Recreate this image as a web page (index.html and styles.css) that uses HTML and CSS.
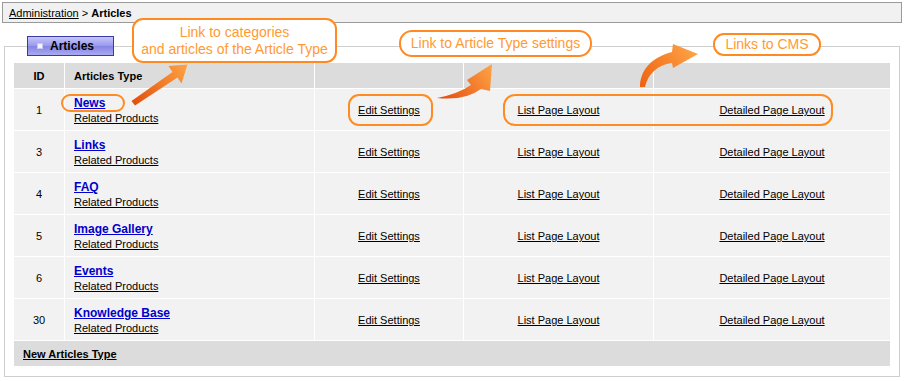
FILE: index.html
```html
<!DOCTYPE html>
<html lang="en">
<head>
  <meta charset="UTF-8" />
  <title>Articles</title>
  <link rel="stylesheet" href="styles.css">
</head>
<body>
  <div class="page">
    <div class="crumbs">
      <a href="#">Administration</a> &gt; <b>Articles</b>
    </div>

    <fieldset class="panel">
      <legend><span class="tab"><i class="tab-icon"></i>Articles</span></legend>
      <table class="grid">
        <colgroup>
          <col style="width:51px">
          <col style="width:250px">
          <col style="width:149px">
          <col style="width:190px">
          <col style="width:236px">
        </colgroup>
        <tr class="head">
          <th class="id">ID</th>
          <th>Articles Type</th>
          <th></th>
          <th></th>
          <th class="last"></th>
        </tr>
        <tr>
          <td class="id">1</td>
          <td><a class="name" href="#">News</a><a class="sub" href="#">Related Products</a></td>
          <td class="mid"><a href="#">Edit Settings</a></td>
          <td class="mid"><a href="#">List Page Layout</a></td>
          <td class="mid last"><a href="#">Detailed Page Layout</a></td>
        </tr>
        <tr>
          <td class="id">3</td>
          <td><a class="name" href="#">Links</a><a class="sub" href="#">Related Products</a></td>
          <td class="mid"><a href="#">Edit Settings</a></td>
          <td class="mid"><a href="#">List Page Layout</a></td>
          <td class="mid last"><a href="#">Detailed Page Layout</a></td>
        </tr>
        <tr>
          <td class="id">4</td>
          <td><a class="name" href="#">FAQ</a><a class="sub" href="#">Related Products</a></td>
          <td class="mid"><a href="#">Edit Settings</a></td>
          <td class="mid"><a href="#">List Page Layout</a></td>
          <td class="mid last"><a href="#">Detailed Page Layout</a></td>
        </tr>
        <tr>
          <td class="id">5</td>
          <td><a class="name" href="#">Image Gallery</a><a class="sub" href="#">Related Products</a></td>
          <td class="mid"><a href="#">Edit Settings</a></td>
          <td class="mid"><a href="#">List Page Layout</a></td>
          <td class="mid last"><a href="#">Detailed Page Layout</a></td>
        </tr>
        <tr>
          <td class="id">6</td>
          <td><a class="name" href="#">Events</a><a class="sub" href="#">Related Products</a></td>
          <td class="mid"><a href="#">Edit Settings</a></td>
          <td class="mid"><a href="#">List Page Layout</a></td>
          <td class="mid last"><a href="#">Detailed Page Layout</a></td>
        </tr>
        <tr>
          <td class="id">30</td>
          <td><a class="name" href="#">Knowledge Base</a><a class="sub" href="#">Related Products</a></td>
          <td class="mid"><a href="#">Edit Settings</a></td>
          <td class="mid"><a href="#">List Page Layout</a></td>
          <td class="mid last"><a href="#">Detailed Page Layout</a></td>
        </tr>
        <tr class="foot">
          <td colspan="5"><a href="#">New Articles Type</a></td>
        </tr>
      </table>
    </fieldset>

    <!-- annotations laid over the screen -->
    <div class="note note-cats">Link to categories<br>and articles of the Article Type</div>
    <div class="note note-settings">Link to Article Type settings</div>
    <div class="note note-cms">Links to CMS</div>

    <div class="ring ring-news"></div>
    <div class="ring ring-edit"></div>
    <div class="ring ring-cms"></div>

    <svg class="arrows" width="904" height="381" viewBox="0 0 904 381">
      <defs>
        <linearGradient id="g1" x1="133" y1="103" x2="188" y2="64" gradientUnits="userSpaceOnUse">
          <stop offset="0" stop-color="#e2500c"/>
          <stop offset="1" stop-color="#ffa445"/>
        </linearGradient>
        <linearGradient id="g2" x1="437" y1="98" x2="492" y2="64" gradientUnits="userSpaceOnUse">
          <stop offset="0" stop-color="#e2480a"/>
          <stop offset="1" stop-color="#ffa447"/>
        </linearGradient>
        <linearGradient id="g3" x1="640" y1="87" x2="698" y2="48" gradientUnits="userSpaceOnUse">
          <stop offset="0" stop-color="#ee620e"/>
          <stop offset="1" stop-color="#ffa64a"/>
        </linearGradient>
      </defs>
      <path d="M131.5,101 L172.5,72 L168.5,66 L187.5,64.5 L181.5,83.5 L177.5,77.5 L135,105.5 Z" fill="url(#g1)"/>
      <path d="M437,98 Q458,94 471,85 L467,80 L492,64 L490,91 L481,89 Q465,101 437,98 Z" fill="url(#g2)"/>
      <path d="M640,87 C640,70 652,57 672,52 L673,44 L698,54 L673,68 L672,63 C657,65 648,74 645,87 Z" fill="url(#g3)"/>
    </svg>
  </div>
</body>
</html>
```

FILE: styles.css
```css
body {
  margin: 0;
  background-color: #fff;
  color: #000;
  font-family: "Liberation Sans", Arial, sans-serif;
  font-size: 11px;
}

a {
  color: #000;
}

.page {
  position: relative;
  width: 904px;
  height: 381px;
  padding: 2px;
  box-sizing: border-box;
}

.crumbs {
  height: 19px;
  line-height: 20px;
  padding: 0 6px;
  border: 1px solid #9a9a9a;
  background-color: #f1f1f1;
}

.panel {
  margin: 13px 2px 0 2px;
  padding: 7px 9px 10px 9px;
  border: 1px solid #cfcfcf;
  min-width: 0;
}

.panel legend {
  padding: 0;
  margin-left: 13px;
}

.tab {
  display: flex;
  align-items: center;
  width: 87px;
  height: 20px;
  box-sizing: border-box;
  padding-left: 9px;
  border: 1px solid #3a3aa6;
  background: linear-gradient(#c6c6fa, #9a9aee 48%, #8585e4 52%, #a9a9f2);
  font-size: 12px;
  font-weight: bold;
}

.tab-icon {
  display: block;
  width: 4px;
  height: 4px;
  margin-right: 7px;
  border: 1px solid #c8c8e8;
  background-color: #f4f4ff;
}

.grid {
  width: 876px;
  border-collapse: separate;
  border-spacing: 0;
  table-layout: fixed;
}

.grid th,
.grid td {
  padding: 0;
  border-right: 1px solid #fff;
  border-bottom: 1px solid #fff;
  background-color: #f2f2f2;
  vertical-align: middle;
}

.grid th {
  height: 25px;
  background-color: #dcdcdc;
  text-align: left;
  padding-left: 9px;
  font-weight: bold;
}

.grid td {
  height: 41px;
  padding-left: 9px;
}

.grid .id {
  text-align: center;
  padding-left: 0;
}

.grid .mid {
  height: 40px;
  text-align: center;
  padding-left: 0;
  padding-top: 1px;
}

.grid .last {
  border-right: none;
}

.name {
  display: block;
  width: max-content;
  line-height: 16px;
  margin-top: 1px;
  font-size: 12px;
  font-weight: bold;
  color: #0000cc;
}

.sub {
  display: block;
  width: max-content;
  line-height: 14px;
}

.grid .foot td {
  height: 25px;
  border: none;
  background-color: #dcdcdc;
}

.foot a {
  font-weight: bold;
}

.note {
  position: absolute;
  box-sizing: border-box;
  border: 2px solid #ff8a22;
  border-radius: 11px;
  background-color: #fff;
  color: #ff9a33;
  font-size: 14px;
  text-align: center;
}

.note-cats {
  left: 132px;
  top: 18px;
  width: 205px;
  height: 45px;
  padding-top: 4px;
  line-height: 17px;
}

.note-settings {
  left: 399px;
  top: 30px;
  width: 193px;
  height: 27px;
  line-height: 23px;
  border-radius: 13px;
}

.note-cms {
  left: 713px;
  top: 33px;
  width: 108px;
  height: 23px;
  line-height: 19px;
}

.ring {
  position: absolute;
  box-sizing: border-box;
  border: 2px solid #ff8c22;
}

.ring-news {
  left: 61px;
  top: 94px;
  width: 64px;
  height: 18px;
  border-radius: 9px;
}

.ring-edit {
  left: 348px;
  top: 94px;
  width: 85px;
  height: 32px;
  border-radius: 11px;
}

.ring-cms {
  left: 503px;
  top: 94px;
  width: 330px;
  height: 32px;
  border-radius: 12px;
}

.arrows {
  position: absolute;
  left: 0;
  top: 0;
  pointer-events: none;
}
```
